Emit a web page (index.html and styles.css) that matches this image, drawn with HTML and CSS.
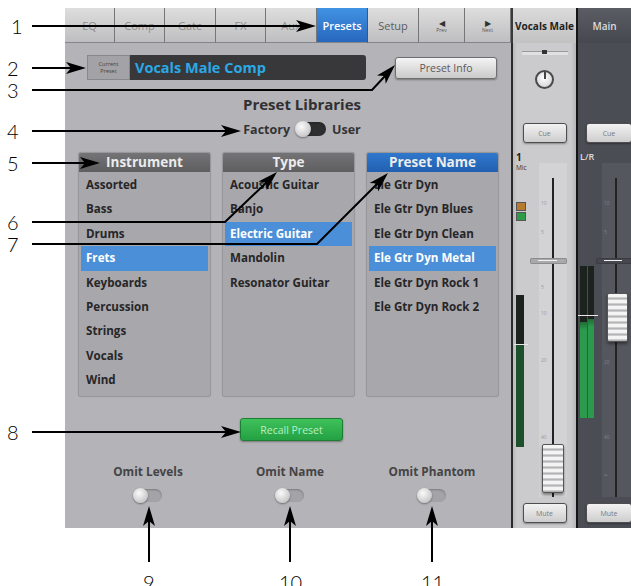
FILE: index.html
```html
<!DOCTYPE html>
<html>
<head>
<meta charset="utf-8">
<title>Presets</title>
<link rel="stylesheet" href="styles.css">
</head>
<body>
<div class="page">
  <div class="device">
    <div class="main">
      <div class="tabs">
        <div class="tab w50">EQ</div>
        <div class="tab w50">Comp</div>
        <div class="tab w51">Gate</div>
        <div class="tab w50">FX</div>
        <div class="tab w51">Aux</div>
        <div class="tab w51 active">Presets</div>
        <div class="tab w51 dark">Setup</div>
        <div class="tab w46 nav"><span class="tri">&#9664;</span><span class="tiny">Prev</span></div>
        <div class="tab w46 nav"><span class="tri">&#9654;</span><span class="tiny">Next</span></div>
      </div>
      <div class="panel">
        <div class="preset-row">
          <div class="cur-label"><span>Current</span><span>Preset</span></div>
          <div class="cur-field">Vocals Male Comp</div>
          <div class="info-btn">Preset Info</div>
        </div>
        <div class="lib-title">Preset Libraries</div>
        <div class="lib-switch">
          <span>Factory</span>
          <span class="switch dark"><span class="knob"></span></span>
          <span>User</span>
        </div>
        <div class="lists">
          <div class="list">
            <div class="list-head">Instrument</div>
            <div class="item">Assorted</div>
            <div class="item">Bass</div>
            <div class="item">Drums</div>
            <div class="item sel">Frets</div>
            <div class="item">Keyboards</div>
            <div class="item">Percussion</div>
            <div class="item">Strings</div>
            <div class="item">Vocals</div>
            <div class="item">Wind</div>
          </div>
          <div class="list">
            <div class="list-head">Type</div>
            <div class="item">Acoustic Guitar</div>
            <div class="item">Banjo</div>
            <div class="item sel">Electric Guitar</div>
            <div class="item">Mandolin</div>
            <div class="item">Resonator Guitar</div>
          </div>
          <div class="list">
            <div class="list-head blue">Preset Name</div>
            <div class="item">Ele Gtr Dyn</div>
            <div class="item">Ele Gtr Dyn Blues</div>
            <div class="item">Ele Gtr Dyn Clean</div>
            <div class="item sel">Ele Gtr Dyn Metal</div>
            <div class="item">Ele Gtr Dyn Rock 1</div>
            <div class="item">Ele Gtr Dyn Rock 2</div>
          </div>
        </div>
        <div class="recall">Recall Preset</div>
        <div class="omits">
          <div class="omit"><span class="omit-label">Omit Levels</span><span class="switch"><span class="knob"></span></span></div>
          <div class="omit"><span class="omit-label">Omit Name</span><span class="switch"><span class="knob"></span></span></div>
          <div class="omit"><span class="omit-label">Omit Phantom</span><span class="switch"><span class="knob"></span></span></div>
        </div>
      </div>
    </div>

    <div class="strip ch">
      <div class="strip-head">Vocals Male</div>
      <div class="strip-body">
        <div class="pan">
          <div class="pan-scale"><span class="pan-mark"></span></div>
          <div class="pan-knob"></div>
        </div>
        <div class="sbtn cue">Cue</div>
        <div class="fader-area">
          <div class="left-col">
            <div class="ch-num">1</div>
            <div class="ch-type">Mic</div>
            <div class="ind orange"></div>
            <div class="ind green"></div>
            <div class="meter">
              <div class="bar"><div class="fill dim" style="height:103px"></div></div>
              <div class="zero"></div>
            </div>
          </div>
          <div class="track light">
            <span class="tick" style="top:38px">10</span>
            <span class="tick" style="top:67px">5</span>
            <span class="tick" style="top:122px">5</span>
            <span class="tick" style="top:148px">10</span>
            <span class="tick" style="top:195px">20</span>
            <span class="tick" style="top:272px">40</span>
            <span class="unity"></span>
            <span class="cap" style="top:281px"></span>
          </div>
        </div>
        <div class="sbtn mute">Mute</div>
      </div>
    </div>

    <div class="strip mstrip">
      <div class="strip-head">Main</div>
      <div class="strip-body">
        <div class="pan blank"></div>
        <div class="sbtn cue">Cue</div>
        <div class="fader-area">
          <div class="left-col">
            <div class="ch-num lr">L/R</div>
            <div class="ch-type"></div>
            <div class="ind none"></div>
            <div class="ind none"></div>
            <div class="meter stereo">
              <div class="bar"><div class="fill bright" style="height:96px"></div></div>
              <div class="bar"><div class="fill bright" style="height:99px"></div></div>
              <div class="zero"></div>
            </div>
          </div>
          <div class="track dark">
            <span class="tick" style="top:38px">10</span>
            <span class="tick" style="top:67px">5</span>
            <span class="tick" style="top:197px">20</span>
            <span class="tick" style="top:272px">40</span>
            <span class="tick" style="top:310px">&#8734;</span>
            <span class="unity"></span>
            <span class="cap" style="top:130px"></span>
          </div>
        </div>
        <div class="sbtn mute">Mute</div>
      </div>
    </div>
  </div>
</div>

<svg class="annot" width="631" height="586" viewBox="0 0 631 586">
  <g stroke="#000" stroke-width="2" fill="none">
    <line x1="32" y1="26" x2="302" y2="26"/>
    <line x1="32" y1="68" x2="72" y2="68"/>
    <polyline points="32,90 372,90 386,75"/>
    <line x1="32" y1="131" x2="226" y2="131"/>
    <line x1="32" y1="163" x2="86" y2="163"/>
    <polyline points="32,222 225,222 267,182"/>
    <polyline points="32,244 317,244 378,183"/>
    <line x1="32" y1="432" x2="226" y2="432"/>
    <line x1="149" y1="562" x2="149" y2="520"/>
    <line x1="290" y1="562" x2="290" y2="520"/>
    <line x1="432" y1="562" x2="432" y2="520"/>
  </g>
  <g fill="#000">
    <path transform="translate(316,26)" d="M0 0 L-20 -6 L-15 0 L-20 6 Z"/>
    <path transform="translate(86,68)" d="M0 0 L-20 -6 L-15 0 L-20 6 Z"/>
    <path transform="translate(395,65) rotate(-47)" d="M0 0 L-20 -6 L-15 0 L-20 6 Z"/>
    <path transform="translate(241,131)" d="M0 0 L-20 -6 L-15 0 L-20 6 Z"/>
    <path transform="translate(100,163)" d="M0 0 L-20 -6 L-15 0 L-20 6 Z"/>
    <path transform="translate(277,172) rotate(-44)" d="M0 0 L-20 -6 L-15 0 L-20 6 Z"/>
    <path transform="translate(388,173) rotate(-45)" d="M0 0 L-20 -6 L-15 0 L-20 6 Z"/>
    <path transform="translate(241,432)" d="M0 0 L-20 -6 L-15 0 L-20 6 Z"/>
    <path transform="translate(149,506) rotate(-90)" d="M0 0 L-20 -6 L-15 0 L-20 6 Z"/>
    <path transform="translate(290,506) rotate(-90)" d="M0 0 L-20 -6 L-15 0 L-20 6 Z"/>
    <path transform="translate(432,506) rotate(-90)" d="M0 0 L-20 -6 L-15 0 L-20 6 Z"/>
  </g>
</svg>
<span class="num" style="left:11px;top:15px">1</span>
<span class="num" style="left:7px;top:57px">2</span>
<span class="num" style="left:7px;top:79px">3</span>
<span class="num" style="left:7px;top:120px">4</span>
<span class="num" style="left:7px;top:152px">5</span>
<span class="num" style="left:7px;top:211px">6</span>
<span class="num" style="left:7px;top:233px">7</span>
<span class="num" style="left:7px;top:421px">8</span>
<span class="num" style="left:143px;top:571px">9</span>
<span class="num" style="left:279px;top:571px">10</span>
<span class="num" style="left:421px;top:571px">11</span>
</body>
</html>
```
FILE: styles.css
```css
* { box-sizing: border-box; margin: 0; padding: 0; }
html, body { width: 631px; height: 586px; overflow: hidden; background: #fff; }
body { position: relative; font-family: "Open Sans", "Noto Sans", sans-serif; }

.page { padding: 8px 0 0 65px; }
.device { display: flex; width: 566px; height: 520px; }

/* ---------- tabs ---------- */
.main { width: 446px; display: flex; flex-direction: column; }
.tabs { display: flex; height: 35px; }
.tab {
  height: 35px;
  border-right: 1px solid #76767a;
  border-bottom: 1px solid #86868a;
  background: linear-gradient(#dedede, #bebec0);
  display: flex; align-items: center; justify-content: center;
  font-size: 11px; color: #8c8c8e;
}
.w50 { width: 50px; }
.w51 { width: 51px; }
.w46 { width: 46px; }
.tab.active { background: linear-gradient(#4192e2, #2767bd); color: #fff; font-weight: 600; border-right-color: #2a5a9a; }
.tab.dark { color: #5c5c5e; }
.tab.nav { flex-direction: column; gap: 0; color: #333; }
.tri { font-size: 8px; line-height: 9px; color: #333; }
.tiny { font-size: 5px; line-height: 6px; color: #555; }

/* ---------- panel ---------- */
.panel {
  height: 485px;
  background: #b4b3b7;
  padding-top: 12px;
  display: flex; flex-direction: column;
}
.preset-row { display: flex; align-items: center; margin-left: 22px; height: 25px; }
.cur-label {
  width: 43px; height: 25px;
  background: #a3a2a6;
  border: 1px solid #88878b;
  font-size: 5.5px; line-height: 6.5px; color: #444;
  display: flex; flex-direction: column; align-items: center; justify-content: center; text-align: center;
}
.cur-field {
  width: 236px; height: 25px;
  background: #38383a;
  border-radius: 0 3px 3px 0;
  color: #2ba8e6; font-weight: 700; font-size: 14.5px;
  padding-left: 5px; line-height: 25px;
}
.info-btn {
  margin-left: 29px; width: 102px; height: 22px;
  background: linear-gradient(#f4f4f4, #cacaca);
  border: 1px solid #6f6f72; border-radius: 3px;
  box-shadow: 0 1px 2px rgba(0,0,0,.35);
  font-size: 10.5px; color: #5a5a5c;
  display: flex; align-items: center; justify-content: center;
}
.lib-title {
  margin-top: 14px; padding-left: 28px;
  text-align: center; font-weight: 700; font-size: 15px; line-height: 20px; color: #303032;
}
.lib-switch {
  margin-top: 6px; padding-left: 28px; height: 18px;
  display: flex; align-items: center; justify-content: center; gap: 6px;
  font-weight: 700; font-size: 12.5px; color: #333;
}
.switch {
  position: relative; display: inline-block;
  width: 28px; height: 13px; border-radius: 7px;
  background: #a4a3a7;
  box-shadow: inset 0 1px 2px rgba(0,0,0,.25);
}
.switch.dark { width: 30px; height: 14px; background: #2e2e30; }
.knob {
  position: absolute; left: -1px; top: -1px;
  width: 15px; height: 15px; border-radius: 50%;
  background: radial-gradient(circle at 40% 35%, #fafafa, #c9c9cb 70%, #a9a9ab);
  box-shadow: 0 1px 2px rgba(0,0,0,.4);
}
.switch.dark .knob { width: 16px; height: 16px; }

.lists { display: flex; gap: 11px; margin: 14px 0 0 13px; }
.list {
  width: 133px; height: 245px;
  background: #a8a7ab;
  border: 1px solid #98979b; border-radius: 3px;
  padding: 0 2px;
  box-shadow: 0 0 1px rgba(0,0,0,.2);
}
.list-head {
  height: 19px; margin: 0 -2px 1px;
  background: linear-gradient(#747476, #5e5e60);
  border-radius: 2px 2px 0 0;
  color: #ececec; font-weight: 700; font-size: 13.5px; line-height: 19px; text-align: center;
}
.list-head.blue { background: linear-gradient(#2f78cc, #225fb0); }
.item {
  height: 24.4px; line-height: 24.4px;
  padding-left: 5px;
  font-weight: 700; font-size: 11.6px; color: #262628;
  white-space: nowrap;
}
.item.sel { background: #4a8fd8; color: #fff; }

.recall {
  margin: 21px 0 0 175px; width: 103px; height: 23px;
  background: linear-gradient(#3ec15a, #24a143);
  border: 1px solid #1d7d33; border-radius: 3px;
  box-shadow: 0 1px 2px rgba(0,0,0,.35);
  color: #b9eec4; font-size: 10.5px;
  display: flex; align-items: center; justify-content: center;
}
.omits { display: grid; grid-template-columns: repeat(3, 142px); margin: 22px 0 0 12px; }
.omit { display: flex; flex-direction: column; align-items: center; gap: 10px; }
.omit-label { font-weight: 700; font-size: 11.8px; line-height: 16px; color: #444446; }

/* ---------- strips ---------- */
.strip { display: flex; flex-direction: column; }
.ch { width: 65px; }
.mstrip { width: 55px; }
.strip-head {
  height: 35px;
  display: flex; align-items: center; justify-content: center;
  font-weight: 700; font-size: 10px; white-space: nowrap; overflow: hidden;
}
.ch .strip-head { background: linear-gradient(#dadada, #c2c2c2); border-left: 2px solid #3a3a3a; color: #222; }
.mstrip .strip-head { background: linear-gradient(#5a5d64, #45484e); border-left: 2px solid #151515; color: #dcdcdc; font-weight: 600; }
.strip-body {
  height: 485px;
  display: flex; flex-direction: column; align-items: center;
  padding-top: 6px;
  overflow: hidden;
}
.ch .strip-body { background: linear-gradient(90deg, #b9b9bb 0, #cbcbcd 4px, #cbcbcd 58px, #b5b5b7 100%); border-left: 2px solid #2a2a2a; }
.mstrip .strip-body { background: #4a4d54; border-left: 2px solid #141414; }

.pan { width: 46px; height: 48px; display: flex; flex-direction: column; align-items: center; }
.pan-scale {
  position: relative; margin-top: 2px;
  width: 46px; height: 4px;
  border-top: 1px solid #9a9a9c;
  background: #e0e0e0;
}
.pan-mark { position: absolute; left: 20px; top: -2px; width: 5px; height: 4px; background: #333; }
.pan-knob {
  margin-top: 15px; width: 19px; height: 19px; border-radius: 50%;
  border: 2px solid #4a4a4c;
  background: radial-gradient(circle at 45% 40%, #ffffff, #d9d9d9 70%, #a8a8a8);
  position: relative;
}
.pan-knob::after { content: ""; position: absolute; left: 6.5px; top: 0; width: 2px; height: 7px; background: #444; }

.sbtn {
  width: 44px; height: 20px;
  background: linear-gradient(#f2f2f2, #cdcdcd);
  border: 1px solid #4e4e50; border-radius: 3px;
  box-shadow: 0 1px 2px rgba(0,0,0,.35);
  font-size: 7px; color: #7a7a7c;
  display: flex; align-items: center; justify-content: center;
}
.cue { margin-top: 26px; }
.mstrip .sbtn { align-self: flex-start; margin-left: 8px; width: 46px; }

.fader-area { display: flex; width: 100%; height: 350px; margin-top: 8px; }
.left-col { width: 16px; margin-left: 3px; display: flex; flex-direction: column; }
.mstrip .left-col { margin-left: 2px; width: 15px; }
.ch-num { font-weight: 700; font-size: 10px; line-height: 12px; color: #222; }
.ch-num.lr { color: #ddd; font-weight: 600; font-size: 9px; white-space: nowrap; }
.ch-type { font-size: 6.5px; line-height: 9px; color: #333; height: 9px; }
.ind { width: 10px; height: 9px; margin-top: 1px; border: 1px solid #555; }
.ind.orange { margin-top: 30px; background: #b87a2e; }
.ind.green { background: #2f9a48; }
.ind.none { border: 0; }
.ind.none:first-of-type { margin-top: 30px; }
.meter {
  position: relative; margin-top: 74px;
  width: 8px; height: 152px;
  display: flex; gap: 1px;
}
.meter.stereo { width: 14px; }
.bar { flex: 1; height: 100%; background: #1c221e; display: flex; flex-direction: column; justify-content: flex-end; }
.fill.dim { background: #1c4f2c; }
.fill.bright { background: linear-gradient(#1f6b35 0, #2c9a4d 8px, #2c9a4d 100%); }
.zero { position: absolute; left: -2px; right: -4px; top: 49px; height: 1px; background: #e8e8e8; }

.track {
  position: relative;
  width: 28px; height: 334px; margin: 12px 0 0 7px;
}
.track.light { background: #d3d3d5; }
.track.dark { width: 29px; background: #54575e; }
.track::before {
  content: ""; position: absolute; left: 13px; top: 15px; bottom: 0; width: 2px; background: #222;
}
.tick { position: absolute; left: 2px; font-size: 5px; line-height: 5px; color: #9a9a9c; }
.track.dark .tick { color: #7d8088; }
.unity {
  position: absolute; left: -9px; top: 95px; width: 37px; height: 6px;
  background: #a9a9ab; border-radius: 2px;
  box-shadow: inset 0 0 0 1px #8c8c8e;
}
.unity::after { content: ""; position: absolute; left: 8px; right: 10px; top: 2px; height: 1px; background: #f2f2f2; }
.track.dark .unity { left: -6px; width: 36px; background: #45484e; box-shadow: inset 0 0 0 1px #3a3c42; }
.cap {
  position: absolute; left: 3px; width: 22px; height: 49px;
  border: 1px solid #555; border-radius: 2px;
  background: repeating-linear-gradient(#f4f4f4 0, #f4f4f4 3px, #a8a8aa 4px, #d8d8da 6px);
  box-shadow: 0 2px 3px rgba(0,0,0,.4);
}
.track.dark .cap { left: 5px; width: 21px; }

.mute { margin-top: 2px; }

/* ---------- annotations ---------- */
.annot { position: absolute; left: 0; top: 0; pointer-events: none; }
.num {
  position: absolute;
  font-family: "Lato", "DejaVu Sans", sans-serif; font-weight: 300;
  font-size: 20px; line-height: 22px; color: #000;
}
```
